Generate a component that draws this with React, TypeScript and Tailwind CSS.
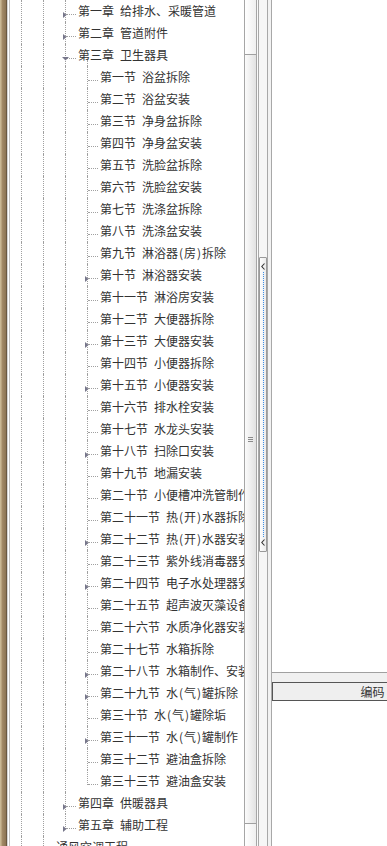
import React from 'react';

type Toggle = 'collapsed' | 'expanded' | 'leaf';

type Node = {
  num: string;
  name: string;
  depth: number; // 1 = root item, 2 = chapter, 3 = section
  toggle: Toggle;
  last?: boolean;
};

const SECTIONS: [string, string, Toggle?][] = [
  ['第一节', '浴盆拆除'],
  ['第二节', '浴盆安装'],
  ['第三节', '净身盆拆除'],
  ['第四节', '净身盆安装'],
  ['第五节', '洗脸盆拆除'],
  ['第六节', '洗脸盆安装'],
  ['第七节', '洗涤盆拆除'],
  ['第八节', '洗涤盆安装'],
  ['第九节', '淋浴器(房)拆除'],
  ['第十节', '淋浴器安装', 'collapsed'],
  ['第十一节', '淋浴房安装'],
  ['第十二节', '大便器拆除'],
  ['第十三节', '大便器安装', 'collapsed'],
  ['第十四节', '小便器拆除'],
  ['第十五节', '小便器安装', 'collapsed'],
  ['第十六节', '排水栓安装'],
  ['第十七节', '水龙头安装'],
  ['第十八节', '扫除口安装', 'collapsed'],
  ['第十九节', '地漏安装'],
  ['第二十节', '小便槽冲洗管制作'],
  ['第二十一节', '热(开)水器拆除'],
  ['第二十二节', '热(开)水器安装', 'collapsed'],
  ['第二十三节', '紫外线消毒器安装'],
  ['第二十四节', '电子水处理器安装', 'collapsed'],
  ['第二十五节', '超声波灭藻设备安装'],
  ['第二十六节', '水质净化器安装'],
  ['第二十七节', '水箱拆除'],
  ['第二十八节', '水箱制作、安装', 'collapsed'],
  ['第二十九节', '水(气)罐拆除', 'collapsed'],
  ['第三十节', '水(气)罐除垢'],
  ['第三十一节', '水(气)罐制作', 'collapsed'],
  ['第三十二节', '避油盒拆除'],
  ['第三十三节', '避油盒安装'],
];

const ROWS: Node[] = [
  { num: '第一章', name: '给排水、采暖管道', depth: 2, toggle: 'collapsed' },
  { num: '第二章', name: '管道附件', depth: 2, toggle: 'collapsed' },
  { num: '第三章', name: '卫生器具', depth: 2, toggle: 'expanded' },
  ...SECTIONS.map(([num, name, t], i) => ({
    num,
    name,
    depth: 3,
    toggle: t ?? 'leaf',
    last: i === SECTIONS.length - 1,
  })),
  { num: '第四章', name: '供暖器具', depth: 2, toggle: 'collapsed' },
  { num: '第五章', name: '辅助工程', depth: 2, toggle: 'collapsed', last: true },
  { num: '通风空调工程', name: '', depth: 1, toggle: 'leaf' },
];

// half-width brackets drawn 6px wide like the bitmap font
function Label({ text }: { text: string }) {
  const parts = text.split(/([()])/);
  return (
    <>
      {parts.map((p, i) =>
        p === '(' || p === ')' ? (
          <span key={i} className="inline-block w-[6px] text-center">
            {p}
          </span>
        ) : (
          <React.Fragment key={i}>{p}</React.Fragment>
        )
      )}
    </>
  );
}

function Guide() {
  return (
    <div className="w-[22px] h-full shrink-0 flex">
      <div className="w-[11px] shrink-0" />
      <div className="h-full border-l border-dotted border-[#a0a0a0]" />
    </div>
  );
}

function Connector({ last, toggle }: { last?: boolean; toggle: Toggle }) {
  return (
    <div className="relative w-[22px] h-full shrink-0">
      <div
        className={
          last
            ? 'absolute left-[11px] top-0 h-[15px] border-l border-dotted border-[#a0a0a0]'
            : 'absolute left-[11px] top-0 h-full border-l border-dotted border-[#a0a0a0]'
        }
      />
      <div className="absolute left-[12px] top-[14px] w-[10px] border-t border-dotted border-[#a0a0a0]" />
      {toggle === 'collapsed' && (
        <svg className="absolute left-[9px] top-[12px]" width="4" height="6" viewBox="0 0 4 6">
          <path d="M0 0L3.5 3L0 6Z" fill="#76768a" />
        </svg>
      )}
      {toggle === 'expanded' && (
        <svg className="absolute left-[8px] top-[13px]" width="7" height="4" viewBox="0 0 7 4">
          <path d="M0 0H7L3.5 3.5Z" fill="#76768a" />
        </svg>
      )}
    </div>
  );
}

function TreeRow({ node }: { node: Node }) {
  const guides = Array.from({ length: node.depth });
  return (
    <div className="relative flex h-[22px] items-stretch">
      {guides.map((_, i) => (
        <Guide key={i} />
      ))}
      <Connector last={node.last} toggle={node.toggle} />
      {node.toggle === 'expanded' && (
        <div className="absolute left-[77px] top-[16px] h-[6px] border-l border-dotted border-[#a0a0a0]" />
      )}
      <div className="ml-[2px] whitespace-nowrap text-[12px] leading-[22px] text-[#333]">
        <span>{node.num}</span>
        {node.name && (
          <span className="ml-[6px]">
            <Label text={node.name} />
          </span>
        )}
      </div>
    </div>
  );
}

export default function App() {
  return (
    <div className="flex h-[846px] w-[387px] overflow-hidden bg-white font-['Noto_Sans_CJK_SC','Liberation_Sans',sans-serif]">
      {/* window frame edge */}
      <div className="w-px shrink-0 bg-[#c9b793]" />
      <div className="w-px shrink-0 bg-[#b8a27e]" />
      <div className="w-[4px] shrink-0 bg-gradient-to-r from-[#a48c68] to-[#8c7454]" />
      <div className="w-px shrink-0 bg-[#6a5840]" />
      <div className="w-px shrink-0 bg-[#d4d4d4]" />
      <div className="w-px shrink-0 bg-white" />
      <div className="w-px shrink-0 bg-[#c4c4c4]" />

      {/* tree */}
      <div className="w-[234px] shrink-0 overflow-hidden">
        {ROWS.map((n) => (
          <TreeRow key={n.num} node={n} />
        ))}
      </div>

      {/* vertical scrollbar */}
      <div className="flex w-[13px] shrink-0 flex-col border-x border-[#a6a6a6]">
        <div className="h-[54px] shrink-0 bg-gradient-to-r from-white to-[#f0f0f0]" />
        <div className="flex h-[770px] shrink-0 items-center justify-center border-y border-[#a0a0a0] bg-gradient-to-r from-[#fbfbfb] to-[#e2e2e2]">
          <svg width="5" height="5" viewBox="0 0 5 5">
            <path d="M0 0.5H5M0 2.5H5M0 4.5H5" stroke="#8a8a8a" strokeWidth="1" />
          </svg>
        </div>
        <div className="flex-1 bg-gradient-to-r from-white to-[#f0f0f0]" />
      </div>

      {/* splitter */}
      <div className="w-px shrink-0 bg-[#fafafa]" />
      <div className="w-px shrink-0 bg-[#a8a8a8]" />
      <div className="flex w-[8px] shrink-0 flex-col bg-[#f6f6f6] pt-[257px]">
        <div className="flex h-[295px] flex-col items-center rounded-[1px] border border-[#9a9a9a] bg-gradient-to-r from-[#fdfdfd] to-[#ececec] py-[5px]">
          <svg width="4" height="7" viewBox="0 0 4 7">
            <path d="M3.5 0.5L0.8 3.5L3.5 6.5" fill="none" stroke="#333" strokeWidth="1.1" />
          </svg>
          <div className="my-[2px] flex-1 border-l border-dotted border-[#3b8ee8]" />
          <svg width="4" height="7" viewBox="0 0 4 7">
            <path d="M3.5 0.5L0.8 3.5L3.5 6.5" fill="none" stroke="#333" strokeWidth="1.1" />
          </svg>
        </div>
      </div>
      <div className="w-px shrink-0 bg-[#a8a8a8]" />
      <div className="w-[3px] shrink-0 bg-[#f2f2f2]" />
      <div className="w-px shrink-0 bg-[#a8a8a8]" />

      {/* right panel */}
      <div className="flex min-w-0 flex-1 flex-col overflow-hidden">
        <div className="h-[672px] shrink-0 bg-white" />
        <div className="h-px shrink-0 bg-[#a0a0a0]" />
        <div className="h-[9px] shrink-0 bg-[#f0f0f0]" />
        <div className="flex h-[19px] w-[200px] shrink-0 items-center justify-center border border-r-0 border-[#555] bg-[#efefef] text-[12px] text-[#333]">
          编码
        </div>
        <div className="flex-1 bg-white" />
      </div>
    </div>
  );
}
